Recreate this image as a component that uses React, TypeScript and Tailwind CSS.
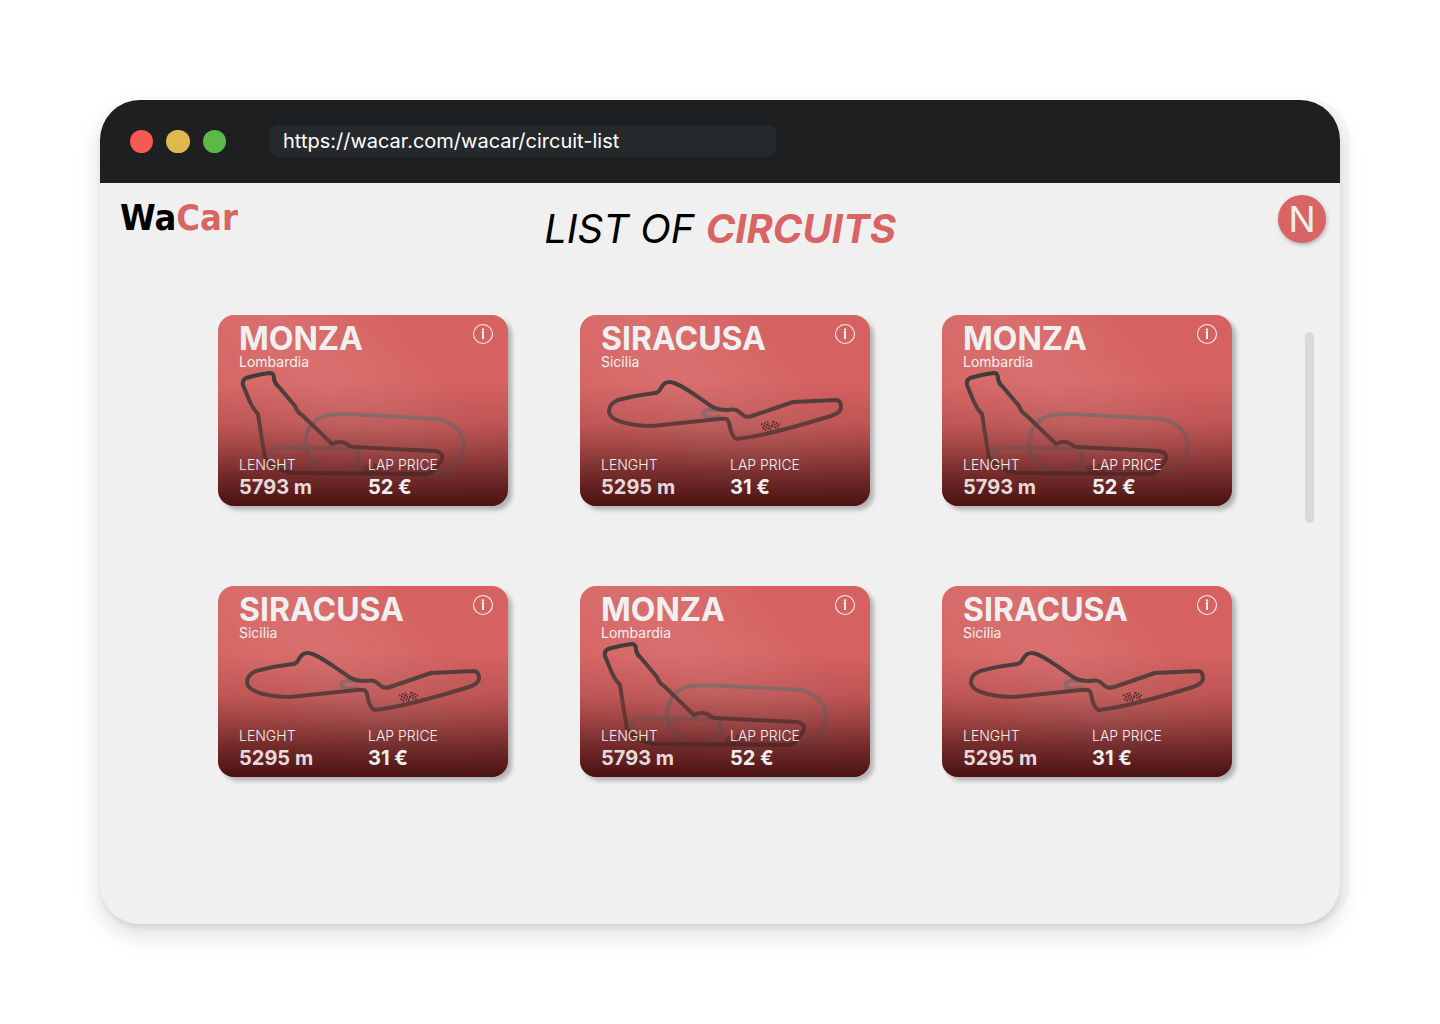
import React from "react";

type Circuit = {
  name: string;
  region: string;
  length: string;
  price: string;
  track: "monza" | "siracusa";
};

const monza: Circuit = { name: "MONZA", region: "Lombardia", length: "5793 m", price: "52 €", track: "monza" };
const siracusa: Circuit = { name: "SIRACUSA", region: "Sicilia", length: "5295 m", price: "31 €", track: "siracusa" };
const circuits: Circuit[] = [monza, siracusa, monza, siracusa, monza, siracusa];

function Flags({ x, y }: { x: number; y: number }) {
  return (
    <g transform={`translate(${x} ${y})`} stroke="#4a2727" strokeLinecap="butt">
      <path d="M0 2.500l7-2.500M1.400 6.500l7-2.500" strokeWidth="1.600" strokeDasharray="1.700 1.500" />
      <path d="M.7 4.500l7-2.500M2 8.500l6-2" strokeWidth="1.600" strokeDasharray="1.700 1.500" strokeDashoffset="1.600" />
      <path d="M12-.500l7 3M10.600 3.500l7 3" strokeWidth="1.600" strokeDasharray="1.700 1.500" />
      <path d="M11.300 1.500l7 3" strokeWidth="1.600" strokeDasharray="1.700 1.500" strokeDashoffset="1.600" />
      <path d="M7 0l3 9M12-1L9 9" strokeWidth="0.600" />
    </g>
  );
}

/* Track drawings share the card's 290 by 191 coordinate system. */
function Track({ kind, id }: { kind: Circuit["track"]; id: string }) {
  const main = `url(#main-${id})`;
  const old = `url(#old-${id})`;
  return (
    <svg viewBox="0 0 290 191" className="absolute inset-0 h-full w-full" fill="none" strokeWidth="4" strokeLinejoin="round" strokeLinecap="round" aria-hidden="true">
      <defs>
        <linearGradient id={`main-${id}`} gradientUnits="userSpaceOnUse" x1="0" y1="58" x2="0" y2="160">
          <stop offset="0" stopColor="#3f3b3a" />
          <stop offset="0.350" stopColor="#583f3e" />
          <stop offset="0.650" stopColor="#673a39" />
          <stop offset="1" stopColor="#522727" />
        </linearGradient>
        <linearGradient id={`old-${id}`} gradientUnits="userSpaceOnUse" x1="0" y1="98" x2="0" y2="160">
          <stop offset="0" stopColor="#8d6a69" />
          <stop offset="0.550" stopColor="#824e4d" />
          <stop offset="1" stopColor="#6a3434" />
        </linearGradient>
      </defs>
      {kind === "monza" ? (
        <>
          <g stroke={old}>
            <path d="M116 99.500H140L221 104Q246 111 246 132Q244 155 218 159M110 158Q89 146 87 131Q88 101 116 99.500" />
            <path d="M139 133H56Q50 135 53 141Q59 155 72 157M141 134Q138 140 141 144Q141 148 135 151L131 158" />
          </g>
          <path stroke={main} d="M28 63Q42 59 52 58Q56 58 56 64Q57 69 61 72L77 91Q79 97 84 100L114 129Q122 125 129 129Q132 132 135 132L217 136Q227 138 223 146L216 155Q212 159 206 159L74 158Q56 155 47 143Q43 119 40 99Q35 94 32 87L25 70Q24 65 28 63Z" />
          <Flags x={145} y={150} />
        </>
      ) : (
        <>
          <path stroke={old} d="M140 95H128Q120 97 125 101Q131 104 139 102" />
          <path stroke={main} d="M38 85Q57 80 75 78C82 78 80 67 89 67C97 66 118 82 131 91Q137 95 147 95C157 93 158 96 163 100Q166 103 172 101L213 87L256 85Q261 85 261 93Q260 98 251 101C225 109 183 121 160 123.500C152 127 150 112 149 108C148 104 146 103 139 104L72 111C58 111 29 108 29 96Q29 89 38 85Z" />
          <Flags x={181} y={107} />
        </>
      )}
    </svg>
  );
}

function CircuitCard({ circuit, id }: { circuit: Circuit; id: string }) {
  return (
    <article className="relative flex h-[191px] w-[290px] flex-col justify-between overflow-hidden rounded-2xl bg-[linear-gradient(50deg,#d56261_10%,#d86f6e_45%,#d86d6c_55%,#d56261_75%)] pt-2 pr-[14px] pb-[7px] pl-[21px] text-[#f0f0f0]">
      <div className="absolute inset-0 bg-[linear-gradient(180deg,rgba(68,15,15,0)_35%,rgba(68,15,15,0.16)_57%,rgba(68,15,15,0.38)_70%,rgba(68,15,15,0.66)_83%,rgba(68,15,15,0.97)_100%)]" />
      <Track kind={circuit.track} id={id} />
      <div className="relative flex items-start justify-between">
        <div>
          <h2 className="text-[32px] leading-8 font-bold">{circuit.name}</h2>
          <p className="text-sm leading-[14px]">{circuit.region}</p>
        </div>
        <button type="button" aria-label={`About ${circuit.name}`} className="cursor-pointer">
          <svg viewBox="0 0 22 22" className="h-[22px] w-[22px]" fill="none" aria-hidden="true">
            <circle cx="11" cy="11" r="9.500" stroke="#f0f0f0" strokeWidth="1.100" />
            <path d="M9.800 9h1.200v7" stroke="#f0f0f0" strokeWidth="2" />
            <circle cx="11" cy="6.400" r="1.200" fill="#f0f0f0" />
          </svg>
        </button>
      </div>
      <dl className="relative grid grid-cols-[129px_auto]">
        <div>
          <dt className="text-sm leading-5 font-light">LENGHT</dt>
          <dd className="text-xl leading-6 font-bold text-[#e4dada]">{circuit.length}</dd>
        </div>
        <div>
          <dt className="text-sm leading-5 font-light">LAP PRICE</dt>
          <dd className="text-xl leading-6 font-bold">{circuit.price}</dd>
        </div>
      </dl>
    </article>
  );
}

export default function App() {
  return (
    <div className="flex min-h-screen flex-col bg-white p-[100px] font-['Inter',sans-serif] [font-optical-sizing:none]">
      <div className="flex grow flex-col overflow-hidden rounded-[40px] bg-[#f0f0f0] shadow-[0_4px_4px_rgba(0,0,0,0.06),0_10px_24px_rgba(0,0,0,0.14),10px_0_0_#f8f8f8]">
        <header className="flex h-[83px] shrink-0 items-center bg-[#1e1f21] px-[30px]">
          <div className="flex gap-[13px]">
            <span className="h-[23px] w-[23px] rounded-full bg-[#f65a52]" />
            <span className="h-[23px] w-6 rounded-full bg-[#e0b94e]" />
            <span className="h-[23px] w-[23px] rounded-full bg-[#5cb848]" />
          </div>
          <input
            aria-label="Address"
            defaultValue="https://wacar.com/wacar/circuit-list"
            className="mb-0.5 ml-11 h-8 w-[506px] rounded-lg bg-[#26292c] px-[13px] text-xl text-white outline-none"
          />
        </header>
        <div className="grid grid-cols-[1fr_auto_1fr] items-start px-[14px] pt-3">
          <a href="#home" className="pl-1.5 font-['DejaVu_Sans_Condensed','DejaVu_Sans',sans-serif] text-[36px] leading-[46px] font-bold text-black">
            Wa<span className="text-[#d86464]">Car</span>
          </a>
          <h1 className="pt-2 text-[40px] leading-[52px] font-normal text-black italic">
            LIST OF <b className="font-bold text-[#d86464]">CIRCUITS</b>
          </h1>
          <button type="button" className="h-12 w-12 justify-self-end rounded-full bg-[#d86464] text-4xl leading-[46px] text-[#f0f0f0] shadow-[1px_2px_4px_rgba(0,0,0,0.25)]">
            N
          </button>
        </div>
        <main className="flex items-start justify-between pt-[60px] pr-[26px] pb-10 pl-[118px]">
          <div className="grid grid-cols-[repeat(3,auto)] gap-x-[72px] gap-y-20">
            {circuits.map((circuit, i) => (
              <div key={i} className="rounded-2xl shadow-[4px_4px_4px_rgba(0,0,0,0.25)]">
                <CircuitCard circuit={circuit} id={String(i)} />
              </div>
            ))}
          </div>
          <div className="mt-[17px] h-[191px] w-[9px] rounded-full bg-[#d9d9d9]" />
        </main>
      </div>
    </div>
  );
}
